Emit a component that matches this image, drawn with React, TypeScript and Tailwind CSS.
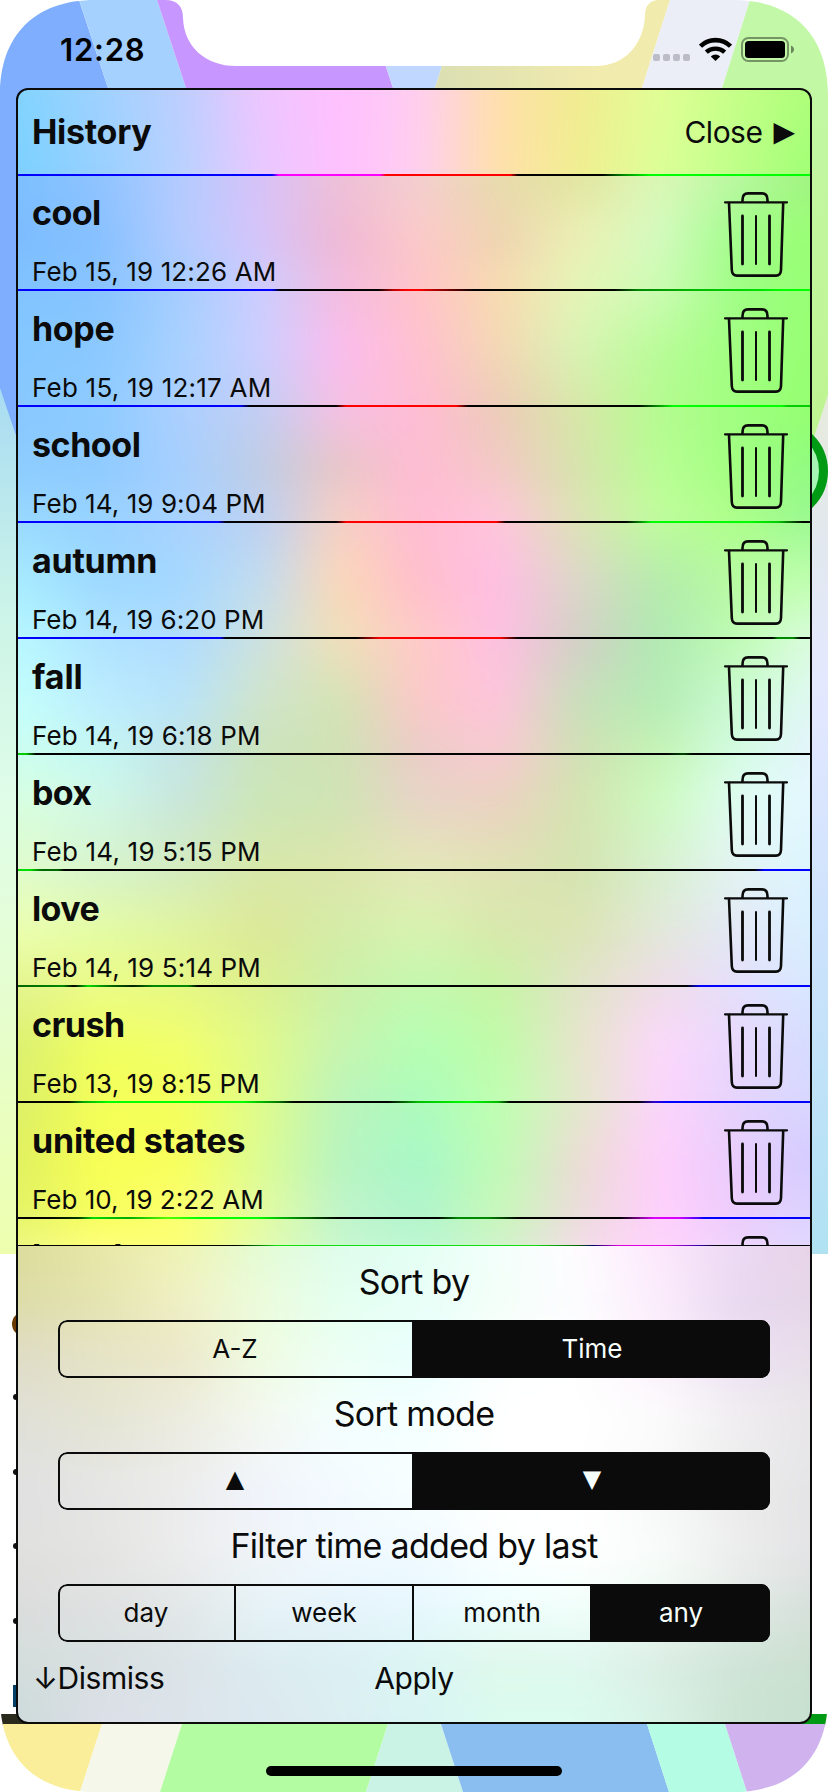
import React from "react";

type MeshRow = { y: number; colors: string };

const MESH_X = [18, 100, 180, 260, 340, 420, 500, 580, 660, 740, 810];

const HEADER_MESH: MeshRow[] = [
  { y: 90, colors: "82d4ff a0d2ff bccfff eec6ff ffc0ff ffcff0 ffe0aa f1ec90 e2ff96 c4ff88 aeff7a" },
  { y: 176, colors: "7bd0ff 98d0ff b8d2ff e8c8ff ffc0ff ffcfee ffe0aa f0ee90 dcff98 bcff88 a0ff74" },
];

const LIST_MESH: MeshRow[] = [
  { y: 176, colors: "7cc0ff 90c4ff b4ccff d8c2f8 efc0d8 f4cfd0 e8dcac e2e59f dcf8b8 b8f8a0 a0f480" },
  { y: 235, colors: "7cbcff 86c0ff b4ccff d6c4fa efb8d4 fccaca eed4b0 ecf0b4 d4fbc0 a0fc8a 9aff74" },
  { y: 290, colors: "80c4ff 88c4ff a6ceff ccceff f4bce0 ffc4c8 f8dcb0 e4f6b8 ccfcb4 9efe84 98ff74" },
  { y: 350, colors: "84c8ff 8ac8ff a8d2ff cccfff fcbcee ffc0d0 f4d8b4 d8f4b4 b8fc98 a0ff80 98ff74" },
  { y: 410, colors: "88c8ff 8eccff acd0ff c2cef4 f6c0e2 ffbcd4 ecccb8 d8e8a8 b4fc90 a0ff80 94ff70" },
  { y: 465, colors: "8cccff 8ecaff a6d0ff c0cde4 e8c6c8 ffbcd4 f2cac4 d6e4ac b8fe94 a0ff80 90fc80" },
  { y: 515, colors: "98d8ff 98d2ff a8d2ff bcd0f2 f6d0c4 ffbcd4 ffc6dc dce4b4 c0fe9c acff88 98f890" },
  { y: 580, colors: "a8ecff 9cd8ff a4d8ff c2dcf0 fcd8b8 ffbecc ffbee4 dcd8c8 b4ecac b8fca0 c0ffb0" },
  { y: 640, colors: "b8f8ff b0e4ff b0dcff cce2e0 f0e0b8 ffcac8 fec0e2 d2d0c6 b0eab2 c0fcb4 dcfce0" },
  { y: 700, colors: "c4fffc bcecff b8e4fa d0e4cc d4e4b4 fcc8c8 fec4dc c8e0ba b4ecb4 ccfcd4 e0f8f4" },
  { y: 750, colors: "ccfff0 c4f8f4 c4e4e8 cce4bc d0e2b4 ecccc8 f8cad2 d0e0b4 c4f4b4 d4fce4 e4f4fc" },
  { y: 800, colors: "d8ffe0 d0f8e8 c8e6dc cce6b8 d0e4b4 e8d4c8 ecd2c2 d4e4b0 ccfcc0 e0fcf4 e4f8ff" },
  { y: 870, colors: "e0fccc d8f4cc d4ecc0 d8e8a8 dce6ac e4e8b8 e0e2b4 d4e4b0 d8f0d0 e4f4f4 dcf4ff" },
  { y: 930, colors: "ecffb0 e4fca4 e0f4a0 dce898 d4eca8 d8f4b0 d8e8ac dce4b4 e2e8da e4e8f8 d8f0ff" },
  { y: 985, colors: "e4f490 ecfc88 e6f884 dcf090 ccf0a8 c4f8b0 c8f4a4 e0e4c8 f0dce8 e4e0fc d8e8ff" },
  { y: 1045, colors: "dcf070 f0ff60 f2ff6c e0fa8c c8f4b0 b4ffb4 c0fca8 e8e4cc fcd8fc e8d8fc d4dcff" },
  { y: 1100, colors: "dcf068 f4ff58 f4ff5c e0fc8c bcf4bc acfcbc c0ffb0 e4e8cc fcd4fc e4d4fc d8d8ff" },
  { y: 1160, colors: "e0f060 f8ff54 f8ff5c dcfc94 b8f4c0 a8f8c8 c0fcb4 ecdcd4 ffd0fc e8ccfc d4ccff" },
  { y: 1215, colors: "e4f468 f8ff5c fcff70 e4fca0 c0f4cc b0f4cc c8f8b8 ecdcdc ffd0fc ecccfc dcd4ff" },
  { y: 1246, colors: "eef884 ffff7c fcff74 e4fcb0 c8f8d0 bcf8d4 d0f4c8 f4dce8 ffd4fc ecd4fc e0d8ff" },
];

const FOOTER_MESH: MeshRow[] = [
  { y: 1246, colors: "dcdc9c e8e8a8 f0f4b4 e4fcd4 dffcec e4fff4 f4fffc fffcff fce8fc ecd8f4 e8d4e8" },
  { y: 1300, colors: "dcdca8 e4e4b0 f0f0c4 ecfcdc e4fff0 e8fff8 f4fff8 fcfcff fcecfc e8d8f0 e6d6e8" },
  { y: 1350, colors: "dfdcc4 e6e4c4 ece8c8 eefce0 ecfff4 e8fffc fcffff ffffff fcf0fc ecdff4 e8deea" },
  { y: 1420, colors: "e0e0d8 e4e4d4 ecece0 f4f8f0 f4ffff f4ffff ffffff ffffff fcfcfc f0eef0 e8e6e8" },
  { y: 1490, colors: "e0e0e2 e6e6e6 ececec f0f4fc f4faff f8ffff ffffff ffffff f8f8f8 ececec e4e4e6" },
  { y: 1550, colors: "e0e0de e4e4e2 ececec f0f4f8 f0faff f0faff fcffff ffffff f8fcfa ececec e4e4e6" },
  { y: 1600, colors: "dcdcdc e0e2e2 e4e8e8 e8f4f8 e8f4fc e8f8ff f0ffff f4fffc f0faf4 e4ece8 d8e0dc" },
  { y: 1660, colors: "d4dedc d8dfe0 dce4e8 dcecf0 dcf0f4 dcf6f4 e0f8ec e0f8f0 dceee4 d0e4d8 cce0d0" },
  { y: 1722, colors: "ccdada dcdfe8 dce4ea dce8f0 dceef0 d8f4f4 dafcee dafcee d8f2e6 cae4d2 c6e0d0" },
];

const BLEED = 60;

/*
 * Each row of colours fades in over the one above, so neighbours blend in both directions.
 * The blur softens the creases; the outer bands bleed past the clip so that no edge fades out.
 */
function Mesh({ id, rows }: { id: string; rows: MeshRow[] }) {
  const top = rows[0].y;
  const bottom = rows[rows.length - 1].y;
  const first = { x: -BLEED, y: top - BLEED, width: 828 + 2 * BLEED, height: BLEED };
  const last = { ...first, y: bottom };
  return (
    <g clipPath={`url(#${id}c)`}>
      <defs>
        <clipPath id={`${id}c`}>
          <rect x={16} y={top} width={796} height={bottom - top} />
        </clipPath>
        <filter
          id={`${id}f`}
          filterUnits="userSpaceOnUse"
          x={-BLEED}
          y={top - BLEED}
          width={828 + 2 * BLEED}
          height={bottom - top + 2 * BLEED}
          colorInterpolationFilters="sRGB"
        >
          <feGaussianBlur stdDeviation="16 12" />
        </filter>
        {rows.map((r, i) => (
          <linearGradient key={r.y} id={`${id}h${i}`} gradientUnits="userSpaceOnUse" x1={18} x2={810} y1={0} y2={0}>
            {r.colors.split(" ").map((c, k) => (
              <stop key={k} offset={(MESH_X[k] - 18) / 792} stopColor={`#${c}`} />
            ))}
          </linearGradient>
        ))}
        {rows.slice(1).map((r, i) => (
          <React.Fragment key={r.y}>
            <linearGradient id={`${id}v${i}`} gradientUnits="userSpaceOnUse" x1={0} x2={0} y1={rows[i].y} y2={r.y}>
              <stop offset={0} stopColor="#fff" stopOpacity={0} />
              <stop offset={1} stopColor="#fff" stopOpacity={1} />
            </linearGradient>
            <mask
              id={`${id}m${i}`}
              maskUnits="userSpaceOnUse"
              x={-BLEED}
              y={rows[i].y}
              width={828 + 2 * BLEED}
              height={r.y - rows[i].y}
            >
              <rect x={-BLEED} y={rows[i].y} width={828 + 2 * BLEED} height={r.y - rows[i].y} fill={`url(#${id}v${i})`} />
            </mask>
          </React.Fragment>
        ))}
      </defs>
      <g filter={`url(#${id}f)`}>
        <rect {...first} fill={`url(#${id}h0)`} />
        <rect {...last} fill={`url(#${id}h${rows.length - 1})`} />
        {rows.slice(1).map((r, i) => {
          const box = { x: -BLEED, y: rows[i].y, width: 828 + 2 * BLEED, height: r.y - rows[i].y };
          return (
            <g key={r.y}>
              <rect {...box} fill={`url(#${id}h${i})`} />
              <rect {...box} fill={`url(#${id}h${i + 1})`} mask={`url(#${id}m${i})`} />
            </g>
          );
        })}
      </g>
    </g>
  );
}

function Wallpaper() {
  return (
    <svg className="absolute inset-0" width={828} height={1792} viewBox="0 0 828 1792" aria-hidden="true">
      <defs>
        <clipPath id="screen">
          <path d="M0 95C0 35 35 0 95 0H165C178 0 183 7 183 18C184 47 206 66 236 66H596C624 66 644 45 645 15C645 6 650 0 659 0H733C793 0 828 35 828 95V1697C828 1757 793 1792 733 1792H95C35 1792 0 1757 0 1697Z" />
        </clipPath>
        <clipPath id="sheet">
          <rect x={17} y={89} width={794} height={1634} rx={11} />
        </clipPath>
        <linearGradient id="left" x1="0" x2="0" y1="0" y2="1">
          <stop offset="0" stopColor="#a4d8f4" />
          <stop offset=".28" stopColor="#ccf4e8" />
          <stop offset=".5" stopColor="#e0fde8" />
          <stop offset="1" stopColor="#edffae" />
        </linearGradient>
        <linearGradient id="right" x1="0" x2="0" y1="0" y2="1">
          <stop offset="0" stopColor="#e9ebd8" />
          <stop offset=".2" stopColor="#e2e8ee" />
          <stop offset=".36" stopColor="#e4e8ff" />
          <stop offset=".65" stopColor="#cce2fc" />
          <stop offset="1" stopColor="#b0e2f2" />
        </linearGradient>
        <linearGradient id="tan" x1="0" x2="1" y1="0" y2="0">
          <stop offset="0" stopColor="#dbdfb2" />
          <stop offset=".7" stopColor="#f2ebae" />
        </linearGradient>
        <linearGradient id="edge" x1="0" x2="0" y1="0" y2="1">
          <stop offset="0" stopColor="#c3f8a9" />
          <stop offset="1" stopColor="#bff490" />
        </linearGradient>
      </defs>
      <g clipPath="url(#screen)">
        <rect width={828} height={1792} fill="#fff" />
        <rect x={0} y={360} width={30} height={894} fill="url(#left)" />
        <rect x={800} y={360} width={28} height={894} fill="url(#right)" />
        <path d="M0 0H79L108 88H30V477L0 388Z" fill="#7eaefd" />
        <path d="M79 0H157L186 88H108Z" fill="#a5d1ff" />
        <path d="M157 0H364L393 88H186Z" fill="#c896ff" />
        <path d="M364 0H463L435 88H393Z" fill="#c0d8ff" />
        <path d="M463 0H670L642 88H435Z" fill="url(#tan)" />
        <path d="M670 0H750L722 88H642Z" fill="#eceef7" />
        <path d="M750 0H828V395L800 479V88H722Z" fill="url(#edge)" />
        <circle cx={777} cy={471} r={46.5} fill="#a6f5b4" stroke="#009a14" strokeWidth={9} />
        <circle cx={24} cy={1324} r={12} fill="#6b3a00" />
        {[1397, 1472, 1546, 1621].map((y) => (
          <circle key={y} cx={16} cy={y} r={3} fill="#111" />
        ))}
        <rect x={13} y={1685} width={10} height={22} fill="#003f66" />
        <rect x={1} y={1714} width={60} height={12} fill="#2a2a1c" />
        <rect x={780} y={1714} width={47} height={12} fill="#009a14" />
        <path d="M0 1724H102L80 1792H0Z" fill="#fbee9a" />
        <path d="M102 1724H182L160 1792H80Z" fill="#f5f7ea" />
        <path d="M182 1724H388L366 1792H160Z" fill="#b4fca2" />
        <path d="M388 1724H441L463 1792H366Z" fill="#caf3e6" />
        <path d="M441 1724H647L669 1792H463Z" fill="#8abef0" />
        <path d="M647 1724H725L747 1792H669Z" fill="#b4fde4" />
        <path d="M725 1724H828V1792H747Z" fill="#cfb2ee" />
      </g>
      <g clipPath="url(#sheet)">
        <Mesh id="a" rows={HEADER_MESH} />
        <Mesh id="b" rows={LIST_MESH} />
        <Mesh id="c" rows={FOOTER_MESH} />
      </g>
    </svg>
  );
}

function TrashIcon() {
  return (
    <svg width={64} height={90} viewBox="24 20 64 90" fill="none" stroke="#0b0b0b" strokeLinecap="round">
      <path d="M25 32.3H87" strokeWidth={2.2} />
      <path d="M42.5 31.5V30C42.5 26 44 23.4 48 23.4H62C66 23.4 67.5 26 67.5 30V31.5" strokeWidth={2.6} />
      <path d="M29 33L31.8 100C32 104 33.5 105.6 37 105.6H76C79.5 105.6 80.8 104 81 100L83.2 33" strokeWidth={2.6} />
      <path d="M42.5 46V94M69.5 46V94" strokeWidth={2.8} />
      <path d="M56 46V94" strokeWidth={2} />
    </svg>
  );
}

/* Stops are "colour position" pairs in sheet pixels. */
const line = (stops: string) => ({ background: `linear-gradient(90deg, ${stops})` });

type Entry = { word: string; date?: string; wordTrack: string; dateTrack: string; rule: string };

const ROWS: Entry[] = [
  { word: "cool", date: "Feb 15, 19 12:26 AM", wordTrack: "tracking-[-0.6px]", dateTrack: "tracking-[0.13px]", rule: "#00f 254px, #000 262px 360px, #b00 375px, #f00 388px 400px, #700 430px, #000 456px 596px, #080 620px, #0b0 680px, #0d0 740px, #0f0 765px" },
  { word: "hope", date: "Feb 15, 19 12:17 AM", wordTrack: "tracking-[-0.35px]", dateTrack: "tracking-[0.22px]", rule: "#00f 222px, #000 232px 318px, #f00 328px 438px, #000 450px 620px, #0f0 655px 764px, #0c0 770px" },
  { word: "school", date: "Feb 14, 19 9:04 PM", wordTrack: "tracking-[-0.45px]", dateTrack: "tracking-[0.08px]", rule: "#00f 200px, #000 208px 318px, #f00 328px 478px, #000 488px 608px, #0f0 634px 730px, #0c0 760px, #000 785px" },
  { word: "autumn", date: "Feb 14, 19 6:20 PM", wordTrack: "tracking-[-0.25px]", dateTrack: "tracking-[0.05px]", rule: "#00f 202px, #000 208px 338px, #f00 362px 482px, #000 500px 754px, #080 760px 775px, #000 782px" },
  { word: "fall", date: "Feb 14, 19 6:18 PM", wordTrack: "tracking-[-0.1px]", dateTrack: "tracking-[0.16px]", rule: "#0c0 8px, #000 18px 648px, #040 665px, #000 675px" },
  { word: "box", date: "Feb 14, 19 5:15 PM", wordTrack: "tracking-[-0.7px]", dateTrack: "tracking-[0.2px]", rule: "#0d0 12px, #060 24px 40px, #000 46px 736px, #00f 746px" },
  { word: "love", date: "Feb 14, 19 5:14 PM", wordTrack: "tracking-[-0.6px]", dateTrack: "tracking-[0.16px]", rule: "#060 0px, #080 45px, #000 56px, #0d0 70px, #070 90px, #020 115px, #080 135px 170px, #000 180px 668px, #00f 682px" },
  { word: "crush", date: "Feb 13, 19 8:15 PM", wordTrack: "tracking-[-0.5px]", dateTrack: "tracking-[0.16px]", rule: "#000 50px, #0a0 66px, #0f0 90px 225px, #070 260px, #000 276px 370px, #0b0 400px, #0f0 450px, #0b0 480px, #000 492px 620px, #30c 636px, #00f 650px" },
  { word: "united states", date: "Feb 10, 19 2:22 AM", wordTrack: "tracking-[-0.22px]", dateTrack: "tracking-[0px]", rule: "#000 30px, #030 60px, #0d0 75px, #0a0 110px, #5f0 150px, #0f0 180px 240px, #060 290px, #000 320px 420px, #080 440px 470px, #000 500px 602px, #d0f 636px 660px, #40f 680px, #00f 686px" },
  { word: "bunch", wordTrack: "tracking-[-0.6px]", dateTrack: "tracking-[0px]", rule: "#000 0px, #000 100%" },
];

function Segments({ items, active, label }: { items: string[]; active: number; label: string }) {
  return (
    <div
      role="group"
      aria-label={label}
      className="relative mx-10 grid h-[58px] auto-cols-fr grid-flow-col overflow-hidden rounded-[9px] after:pointer-events-none after:absolute after:inset-0 after:rounded-[9px] after:border-2 after:border-[#0b0b0b]"
    >
      {items.map((item, i) => {
        const glyph = item === "▲" || item === "▼";
        return (
          <button
            key={item}
            className={`flex items-center justify-center border-[#0b0b0b] leading-8 ${
              i < items.length - 1 ? "border-r-2" : ""
            } ${i === active ? "bg-[#0b0b0b] text-[#f6fffb]" : "text-[#0b0b0b]"} ${
              glyph ? "pb-1 font-['DejaVu_Sans'] text-[24px]" : "text-[26px]"
            }`}
          >
            {item}
          </button>
        );
      })}
    </div>
  );
}

function SectionTitle({ children }: { children: string }) {
  return <h2 className="mt-4 mb-[18px] text-center text-[34px] leading-10 tracking-[-0.7px]">{children}</h2>;
}

export default function App() {
  return (
    <main className="relative h-[1792px] w-[828px] overflow-hidden bg-white font-['Inter','Liberation_Sans',sans-serif] text-[#0b0b0b]">
      <Wallpaper />
      <div className="relative flex h-full flex-col">
        <div className="flex h-[88px] items-start justify-between pt-[30px] pr-[34px] pl-[60px] text-black">
          <span className="text-[31px] leading-10 font-semibold tracking-[0.8px]">12:28</span>
          <div className="flex">
            <div className="mt-6 mr-[9px] flex gap-[3px]">
              {[0, 1, 2, 3].map((i) => (
                <span key={i} className="size-[7px] rounded-[2px] bg-[#bcbcc8]" />
              ))}
            </div>
            <svg className="mt-[7px]" width={33} height={24} viewBox="0 0 33 24" fill="none" stroke="#000">
              <path d="M1.5 9.2A21.5 21.5 0 0 1 31.5 9.2" strokeWidth={4.6} />
              <path d="M7.3 15.2A13.5 13.5 0 0 1 25.7 15.2" strokeWidth={4.4} />
              <path d="M11.8 19.4L16.5 24L21.2 19.4A7 7 0 0 0 11.8 19.4Z" fill="#000" stroke="none" />
            </svg>
            <svg className="mt-[7px] ml-[9px]" width={53} height={25} viewBox="0 0 53 25">
              <rect x={1} y={1} width={46} height={23} rx={6.5} fill="none" stroke="#000" strokeOpacity={0.4} strokeWidth={2} />
              <rect x={4} y={4} width={40} height={17} rx={3.5} />
              <path d="M50 8.5C54 10 54 15 50 16.5Z" fillOpacity={0.45} />
            </svg>
          </div>
        </div>

        <section className="mx-4 flex h-[1636px] flex-col overflow-hidden rounded-[12px] border-2 border-[#0b0b0b]">
          <header className="z-10 flex h-[86px] shrink-0 flex-col">
            <div className="flex h-[84px] items-center justify-between pr-[15px] pl-[14px]">
              <h1 className="text-[34px] leading-10 font-bold tracking-[-0.3px]">History</h1>
              <button className="flex items-center gap-[11px] text-[30px] leading-10">
                <span className="tracking-[-0.5px]">Close</span>
                <span className="font-['DejaVu_Sans'] text-[28px]">▶</span>
              </button>
            </div>
            <div className="h-0.5" style={line("#00f 254px, #f0f 261px 362px, #f00 368px 492px, #000 500px 584px, #080 605px, #0f0 632px")} />
          </header>

          <ul className="-mt-px h-[1070px] shrink-0 overflow-hidden">
            {ROWS.map((row) => (
              <li key={row.word} className="flex h-[116px] flex-col">
                <div className="flex h-[114px] justify-between pr-[22px] pl-[14px]">
                  <div className="flex flex-col gap-[23px] pt-[18px]">
                    <span className={`text-[34px] leading-10 font-bold ${row.wordTrack}`}>{row.word}</span>
                    {row.date && <span className={`text-[26px] leading-8 ${row.dateTrack}`}>{row.date}</span>}
                  </div>
                  <button aria-label="Delete" className="mt-[15px] h-[90px]">
                    <TrashIcon />
                  </button>
                </div>
                <div className="h-0.5" style={line(row.rule)} />
              </li>
            ))}
          </ul>

          <footer className="flex flex-1 flex-col">
            <div className="h-px" style={line("#000 217px, #070 240px, #1d1 258px 516px, #060 560px, #006 575px, #d0d 600px 650px, #30a 680px, #000 700px")} />
            <SectionTitle>Sort by</SectionTitle>
            <Segments label="Sort by" items={["A-Z", "Time"]} active={1} />
            <SectionTitle>Sort mode</SectionTitle>
            <Segments label="Sort mode" items={["▲", "▼"]} active={1} />
            <SectionTitle>Filter time added by last</SectionTitle>
            <Segments label="Filter" items={["day", "week", "month", "any"]} active={3} />
            <div className="mt-[18px] grid grid-cols-3 text-[30px] leading-9 tracking-[-0.45px]">
              <button className="pl-[15px] text-left">↓Dismiss</button>
              <button className="text-center">Apply</button>
            </div>
          </footer>
        </section>

        <div className="mx-auto mt-[42px] h-2.5 w-[296px] rounded-full bg-black" />
      </div>
    </main>
  );
}
